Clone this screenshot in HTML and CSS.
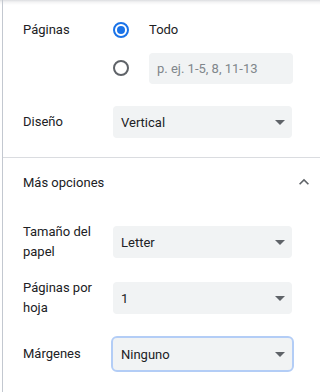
FILE: index.html
```html
<!DOCTYPE html>
<html lang="es">
<head>
<meta charset="utf-8">
<title>Imprimir</title>
<link rel="stylesheet" href="styles.css">
</head>
<body>
<div class="page">
  <div class="sheet">
    <section class="section first">
      <div class="row row-top">
        <div class="label label-option">Páginas</div>
        <div class="options">
          <div class="option">
            <span class="radio on"></span>
            <span class="option-text">Todo</span>
          </div>
          <div class="option">
            <span class="radio"></span>
            <input class="range-input" type="text" placeholder="p. ej. 1-5, 8, 11-13">
          </div>
        </div>
      </div>
      <div class="row">
        <div class="label">Diseño</div>
        <div class="select"><span>Vertical</span><span class="caret"></span></div>
      </div>
    </section>
    <div class="divider"></div>
    <section class="section second">
      <div class="more">
        <span>Más opciones</span>
        <svg class="chevron" viewBox="0 0 24 24" width="20" height="20"><path d="M7.41 15.41L12 10.83l4.59 4.58L18 14l-6-6-6 6z"/></svg>
      </div>
      <div class="row">
        <div class="label">Tamaño del papel</div>
        <div class="select"><span>Letter</span><span class="caret"></span></div>
      </div>
      <div class="row">
        <div class="label">Páginas por hoja</div>
        <div class="select"><span>1</span><span class="caret"></span></div>
      </div>
      <div class="row">
        <div class="label">Márgenes</div>
        <div class="select focused"><span>Ninguno</span><span class="caret"></span></div>
      </div>
      <div class="row">
        <div class="label"></div>
        <div class="next-box"></div>
      </div>
    </section>
  </div>
</div>
</body>
</html>
```

FILE: styles.css
```css
html, body {
  margin: 0;
  padding: 0;
}

body {
  font-family: Roboto, "Liberation Sans", Arial, sans-serif;
  font-size: 13px;
  color: #202124;
  background: #ffffff;
}

.page {
  height: 392px;
  overflow: hidden;
  background: linear-gradient(to bottom, #dcdde0 0, #f3f3f4 2px, #ffffff 5px);
}

.sheet {
  margin-left: 2px;
  border-left: 1px solid #c3c8d0;
  height: 100%;
}

.section {
  display: flex;
  flex-direction: column;
  gap: 16px;
  padding-left: 20px;
  padding-right: 8px;
}

.section.first {
  padding-top: 14px;
  padding-bottom: 15px;
  gap: 18px;
}

.section.second {
  gap: 16px;
}

.row {
  display: grid;
  grid-template-columns: 90px 179px;
  align-items: center;
  min-height: 40px;
}

.row-top {
  align-items: start;
}

.label {
  line-height: 20px;
  padding-right: 8px;
}

.label-option {
  line-height: 32px;
}

.options {
  display: flex;
  flex-direction: column;
  gap: 6px;
}

.option {
  display: flex;
  align-items: center;
  height: 32px;
  gap: 20px;
}

.radio {
  width: 16px;
  height: 16px;
  box-sizing: border-box;
  border: 2px solid #5f6368;
  border-radius: 50%;
  display: flex;
  align-items: center;
  justify-content: center;
  flex: none;
}

.radio.on {
  border-color: #1a73e8;
}

.radio.on::after {
  content: "";
  width: 8px;
  height: 8px;
  border-radius: 50%;
  background: #1a73e8;
}

.option-text {
  line-height: 20px;
}

.range-input {
  width: 144px;
  height: 31px;
  box-sizing: border-box;
  border: none;
  border-radius: 4px;
  background: #f1f3f4;
  padding: 0 8px;
  font-family: inherit;
  font-size: 13px;
  color: #202124;
  outline: none;
  margin-left: 0;
}

.range-input::placeholder {
  color: #80868b;
}

.select {
  display: flex;
  align-items: center;
  justify-content: space-between;
  height: 32px;
  box-sizing: border-box;
  padding: 0 7px 0 8px;
  border-radius: 4px;
  background: #f1f3f4;
}

.select.focused {
  outline: 2px solid #b3cdf6;
  outline-offset: 0;
}

.caret {
  width: 0;
  height: 0;
  border-left: 5px solid transparent;
  border-right: 5px solid transparent;
  border-top: 5px solid #5f6368;
}

.divider {
  height: 1px;
  background: #dadce0;
}

.more {
  display: flex;
  align-items: center;
  justify-content: space-between;
  height: 48px;
  margin-right: -2px;
}

.chevron {
  fill: #5f6368;
  display: block;
}

.next-box {
  width: 67px;
  height: 32px;
  margin-left: 2px;
  border-radius: 4px;
  background: #f1f3f4;
}
```
